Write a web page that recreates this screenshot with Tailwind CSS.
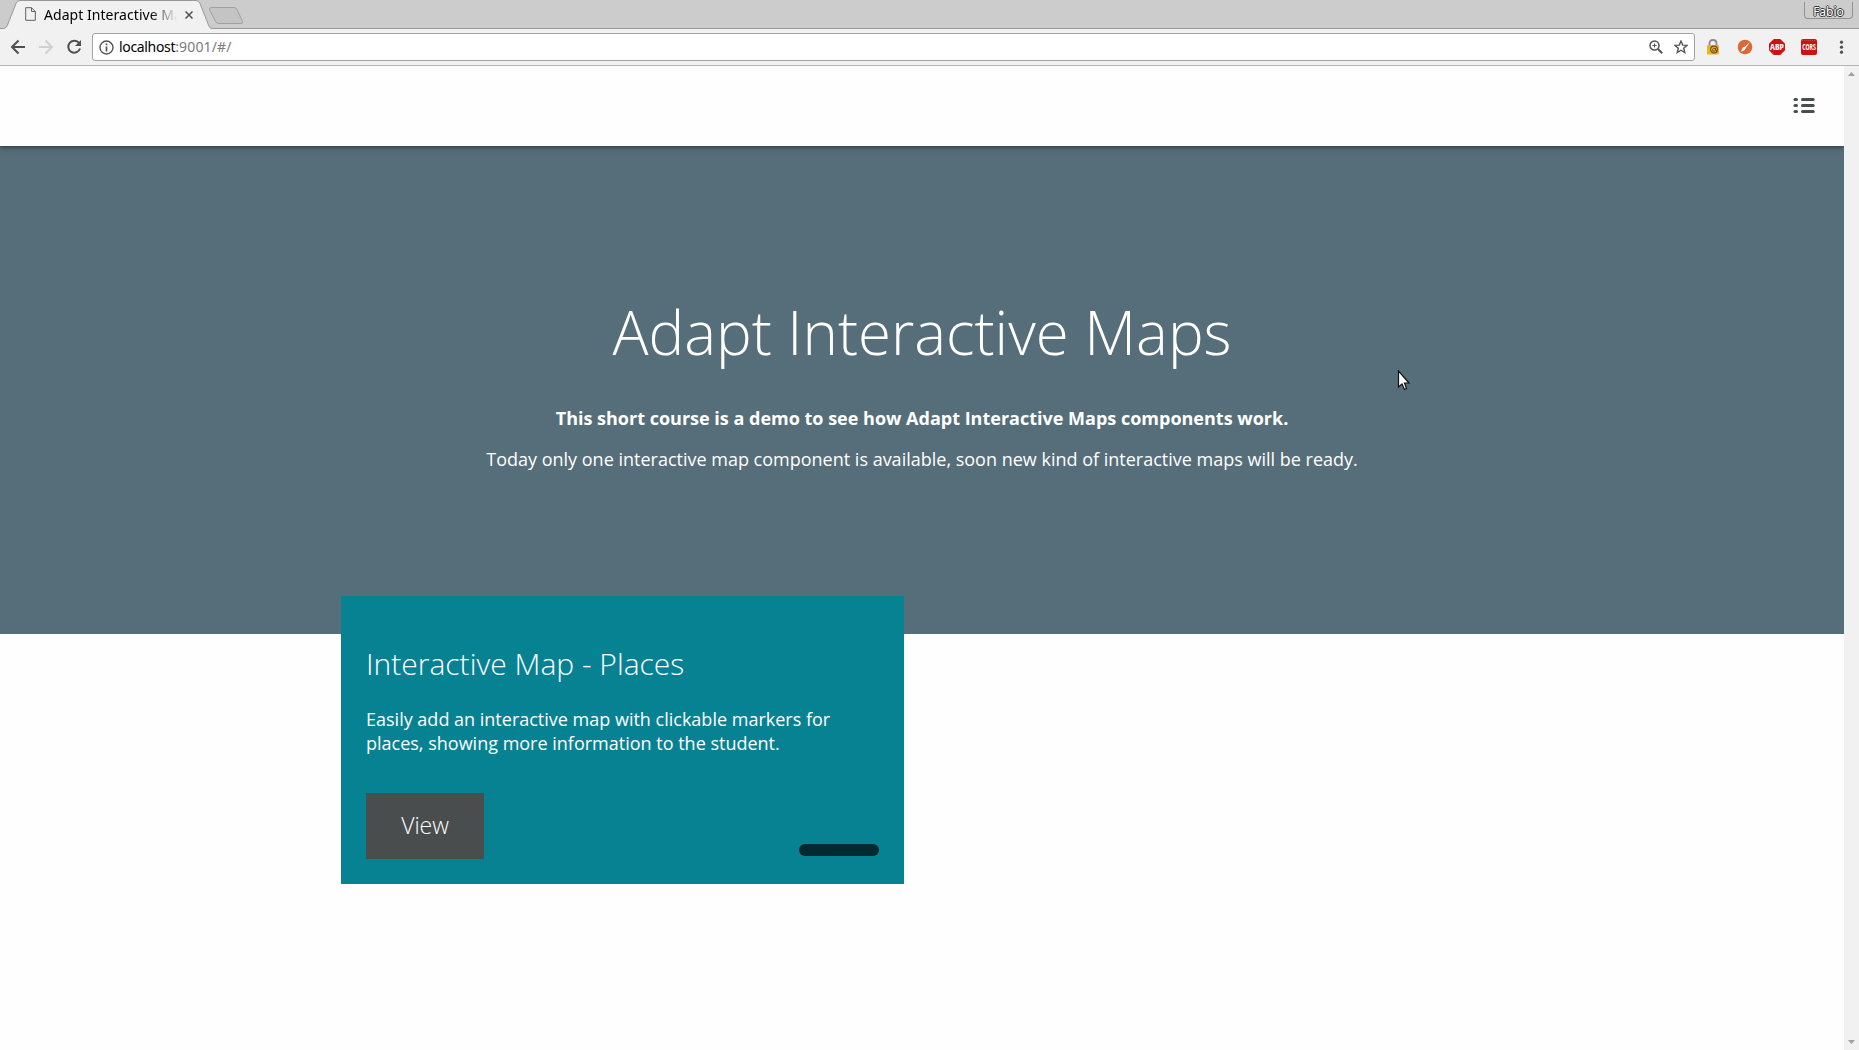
<!DOCTYPE html>
<html lang="en">
<head>
<meta charset="utf-8">
<title>Adapt Interactive Maps</title>
<script src="https://cdn.jsdelivr.net/npm/@tailwindcss/browser@4"></script>
</head>
<body class="relative flex h-[1050px] w-[1859px] flex-col overflow-hidden bg-[#fefefe] font-['Open_Sans',sans-serif]">
  <div class="relative flex h-[29px] shrink-0 justify-between bg-[#cccccc]">
    <svg class="absolute left-0 top-0" width="260" height="29" fill="none">
      <path d="M0 28.5H4Q6.500 28 7.500 25L16 3.500Q17 .5 20 .5H196Q199 .5 200 3.500L208.500 25Q209.500 28.500 212 28.500H260V29H0z" fill="#f2f1f1"/>
      <path d="M0 28.500H4Q6.500 28 7.500 25L16 3.500Q17 .5 20 .5H196Q199 .5 200 3.500L208.500 25Q209.500 28.500 212 28.500H260" stroke="#999"/>
      <path d="M211.500 7.500H234Q236 7.500 237 9.500L242.500 21.500Q243 23.500 241 23.500H219Q216.500 23.500 215.500 21.500L209.500 9.500Q209 7.500 211.500 7.500z" fill="#c4c4c4" stroke="#a0a0a0"/>
    </svg>
    <div class="relative flex h-7 items-center pl-[25px]">
      <svg width="11" height="14" fill="none" stroke="#606060"><path d="M.7.7H6.500L10.300 4.500V13.300H.7zM6.500.7V4.500H10.300"/></svg>
      <span class="ml-2 w-[133px] overflow-hidden whitespace-nowrap bg-linear-to-r from-black from-80% to-transparent bg-clip-text font-['Noto_Sans'] text-[14px] leading-7 tracking-[0.05px] text-transparent pt-0.5">Adapt Interactive Maps</span>
      <svg class="ml-2 mt-0.5" width="8" height="8" stroke="#505050" stroke-width="1.500"><path d="M.5.5L7.500 7.500M7.500.5L.5 7.500"/></svg>
    </div>
    <div class="mr-[6px] mt-0.5 flex h-[17px] w-[49px] items-center justify-center rounded-b border border-t-0 border-[#929292] pt-[3px] font-['Noto_Sans'] text-[12px] leading-none text-white text-shadow-[1px_0_0_#333,-1px_0_0_#333,0_1px_0_#333,0_-1px_0_#333]">Fabio</div>
    <div class="absolute bottom-0 left-[211px] right-0 h-px bg-[#999]"></div>
  </div>
  <div class="relative z-10 flex h-[37px] shrink-0 items-center border-b border-[#b5b5b5] bg-[#f2f1f1] pl-[10px]">
    <svg width="16" height="16" fill="none" stroke="#505050" stroke-width="2"><path d="M15 8H2.500M8.500 1.500L2 8L8.500 14.500"/></svg>
    <svg class="ml-3" width="16" height="16" fill="none" stroke="#d0d0d0" stroke-width="2"><path d="M1 8H13.500M7.500 1.500L14 8L7.500 14.500"/></svg>
    <svg class="ml-3" width="16" height="16" fill="none" stroke="#505050" stroke-width="2"><path d="M13.200 4.200A6 6 0 1 0 14 9.500"/><path d="M15 1V7H9z" fill="#505050" stroke="none"/></svg>
    <div class="ml-[10px] flex h-7 w-[1603px] items-center rounded-[3px] border border-[#a3a3a3] bg-white pl-[6px] pr-[6px]">
      <svg width="15" height="15" fill="none" stroke="#555" stroke-width="1.400"><circle cx="7.500" cy="7.500" r="6.500"/><path d="M7.500 6.500V11.500M7.500 3.500V5.200" stroke-width="1.700"/></svg>
      <span class="ml-[5px] font-['Noto_Sans'] text-[14px] leading-none tracking-[-0.33px] text-[#7c7c7c]"><span class="text-black">localhost</span><span class="tracking-[0.15px]">:9001/#/</span></span>
      <svg class="ml-auto" width="14" height="14" fill="none" stroke="#555" stroke-width="1.500"><circle cx="5.500" cy="5.500" r="4.500"/><path d="M9 9L13.200 13.200" stroke-width="2"/><path d="M3.500 5.500H7.500M5.500 3.500V7.500" stroke-width="1"/></svg>
      <svg class="ml-[11px]" width="14" height="14" viewBox="0 0 14 14" fill="none" stroke="#555" stroke-width="1.400"><path d="M7 1L8.700 5.100L13.100 5.400L9.700 8.200L10.800 12.500L7 10.200L3.200 12.500L4.300 8.200L.9 5.400L5.300 5.100z"/></svg>
    </div>
    <svg class="ml-[11px]" width="14" height="16" fill="none"><path d="M3.500 8V4.500Q3.500 1 7 1T10.500 4.500V8" stroke="#8b8b8b" stroke-width="1.800"/><rect x="1" y="6" width="12" height="9.500" rx="1" fill="#eab818"/><circle cx="8" cy="10.500" r="3.400" stroke="#735018" stroke-width="1.200"/><path d="M9.500 9V11.500H11M9.300 9.500Q7 8.500 6.500 10.500T9 12" stroke="#735018"/></svg>
    <svg class="ml-[17px]" width="16" height="16"><circle cx="8" cy="8" r="7.300" fill="#dc6836"/><path d="M13 3L8.500 9.500Q7.500 12 3.500 12.500Q5 11 5.500 9Q6 7.500 7.500 8z" fill="#fff"/></svg>
    <svg class="ml-4 overflow-visible" width="16" height="16"><path d="M4.800 0H11.200L16 4.800V11.200L11.200 16H4.800L0 11.200V4.800z" fill="#d0120f"/><text x="8" y="11" font-family="Noto Sans" font-size="8.500" font-weight="800" fill="#fff" text-anchor="middle" textLength="14" lengthAdjust="spacingAndGlyphs">ABP</text></svg>
    <svg class="ml-4 overflow-visible" width="16" height="16"><rect width="16" height="16" rx="2" fill="#d0120f"/><path d="M1 1.500H15" stroke="#a55" stroke-dasharray="1 1"/><text x="8" y="10.800" font-family="Noto Sans" font-size="8.500" font-weight="700" fill="#fff" text-anchor="middle" textLength="13.500" lengthAdjust="spacingAndGlyphs">CORS</text></svg>
    <svg class="ml-[21px]" width="6" height="14" fill="#505050"><circle cx="3.500" cy="2.200" r="1.600"/><circle cx="3.500" cy="7.200" r="1.600"/><circle cx="3.500" cy="12.200" r="1.600"/></svg>
  </div>
  <div class="flex min-h-0 flex-1">
    <main class="w-[1844px]">
      <header class="relative flex h-20 items-center justify-end bg-[#fefefe] pr-[29px] shadow-[0_1px_5px_rgba(0,0,0,0.55)]">
        <svg class="-mt-px" width="22" height="17" fill="#4a4d4e"><rect x=".5" y="1" width="4.500" height="3" rx="1.500"/><rect x=".5" y="7" width="4.500" height="3" rx="1.500"/><rect x=".5" y="13" width="4.500" height="3" rx="1.500"/><rect x="8" y="1" width="13.700" height="3" rx="1.500"/><rect x="8" y="7" width="13.700" height="3" rx="1.500"/><rect x="8" y="13" width="13.700" height="3" rx="1.500"/></svg>
      </header>
      <section class="h-[488px] bg-[#566e7a] pt-[146px] text-center text-white">
        <h1 class="text-[60px] font-light leading-[80px]">Adapt Interactive Maps</h1>
        <p class="mt-[34px] text-[18px] font-bold leading-6">This short course is a demo to see how Adapt Interactive Maps components work.</p>
        <p class="mt-[17px] text-[18px] leading-6">Today only one interactive map component is available, soon new kind of interactive maps will be ready.</p>
      </section>
      <section class="relative -mt-[38px] ml-[341px] h-[288px] w-[563px] bg-[#078293] px-[25px] pt-[48px] text-white">
        <h2 class="text-[30px] font-light leading-10">Interactive Map - Places</h2>
        <p class="mt-[23px] w-[500px] text-[18px] leading-6">Easily add an interactive map with clickable markers for places, showing more information to the student.</p>
        <div class="mt-[38px] flex items-end justify-between">
          <button class="h-[66px] w-[118px] bg-[#4a4d4e] pb-0.5 text-[23px] font-light leading-8">View</button>
          <div class="mb-[3px] h-3 w-20 rounded-full bg-[#022a30]"></div>
        </div>
      </section>
    </main>
    <div class="relative flex w-[15px] flex-col items-center justify-between bg-[#f1f1f1] pb-[6px] pt-[6px]">
      <svg width="7" height="4" fill="#a0a0a0"><path d="M0 4L3.500 0L7 4z"/></svg>
      <svg width="7" height="4" fill="#a0a0a0"><path d="M0 0L3.500 4L7 0z"/></svg>
    </div>
  </div>
  <svg class="absolute left-[1397px] top-[370px]" width="14" height="21"><path d="M1.500 1V17L5 14L7.500 19.500L9.500 18.500L7.500 13H12z" fill="#fff" stroke="#111" stroke-width="1.200"/></svg>
</body>
</html>
